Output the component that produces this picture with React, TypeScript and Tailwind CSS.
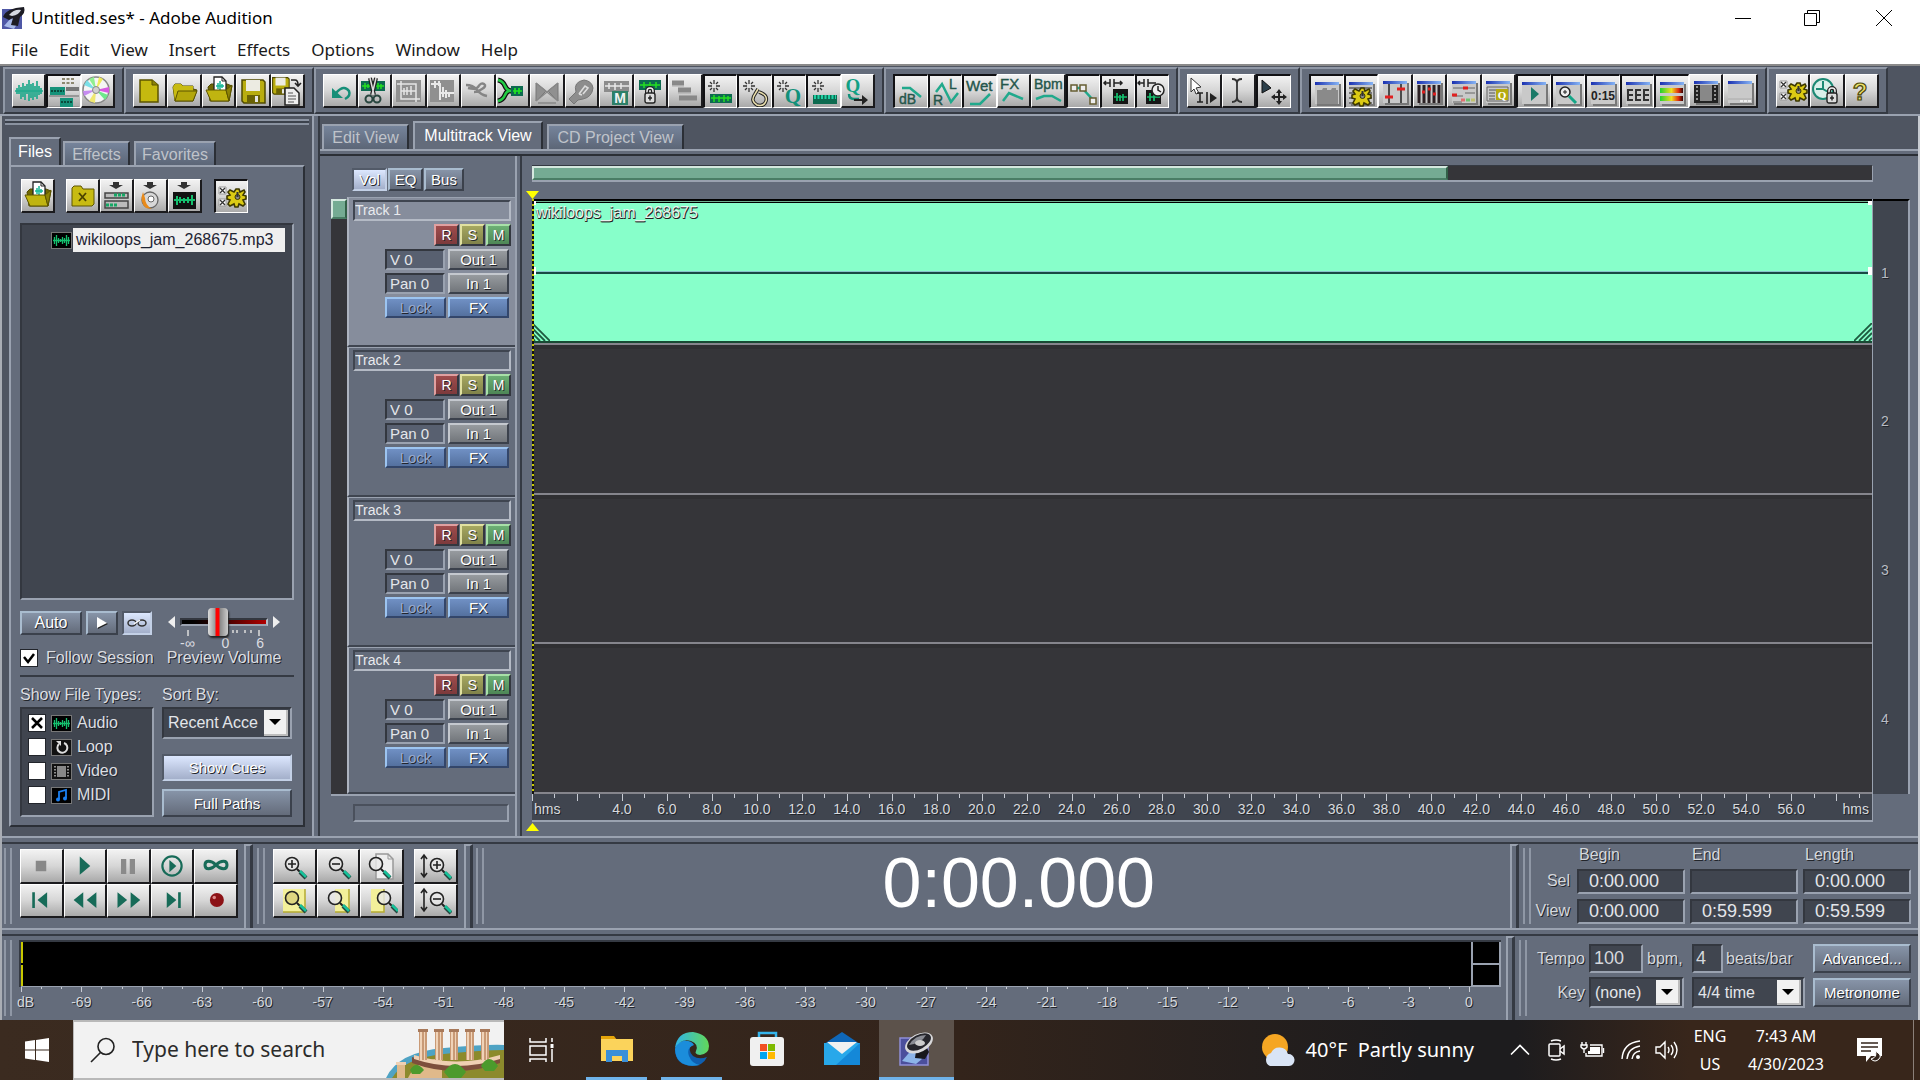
import { useState } from 'react';
import type { ReactNode } from 'react';
import clsx from 'clsx';

type IconButtonProps = {
  label: string;
  pressed?: boolean;
  className?: string;
  children: ReactNode;
};

const raised = 'border-t border-l border-r-2 border-b-2 border-t-white border-l-white border-r-[#1b1b1e] border-b-[#1b1b1e]';
const sunken = 'border-t-2 border-l-2 border-r border-b border-t-[#111114] border-l-[#111114] border-r-white border-b-white';
const metal = 'bg-linear-to-b from-[#f2f2f2] via-[#d6d6d6] to-[#a9a9a9]';
const inset = 'border-t-2 border-l-2 border-r-2 border-b-2 border-t-[#33373f] border-l-[#33373f] border-r-[#9aa2b0] border-b-[#9aa2b0]';
const well = 'bg-[#40454f]';
const shadowText = '[text-shadow:1px_1px_0_#22252b]';
const slateButton = 'border-2 border-t-[#a9bccf] border-l-[#a9bccf] border-r-[#3b414c] border-b-[#3b414c] bg-linear-to-b from-[#8794a8] to-[#646c7b]';
const litButton = 'border-2 border-t-[#525a68] border-l-[#525a68] border-r-[#c3d0e6] border-b-[#c3d0e6] bg-linear-to-b from-[#dde8ff] to-[#a3afca]';

function IconButton({ label, pressed, className, children }: IconButtonProps) {
  return (
    <button
      type="button"
      aria-label={label}
      aria-pressed={pressed}
      className={clsx('flex items-center justify-center overflow-hidden', metal, pressed ? sunken : raised, className)}
    >
      {children}
    </button>
  );
}

function Svg({ children, className = 'size-8' }: { children: ReactNode; className?: string }) {
  return (
    <svg viewBox="0 0 32 32" className={clsx('shrink-0', className)} fill="none" aria-hidden="true">
      {children}
    </svg>
  );
}

// Small tool window with a blue caption, used by the view toggles
function Win({ children }: { children?: ReactNode }) {
  return (
    <Svg>
      <path d="M6 29h23V8" stroke="#777" strokeWidth="2" />
      <rect x="4" y="9" width="24" height="19" fill="#c9c9c9" />
      <rect x="4" y="6" width="24" height="3" fill="url(#caption)" />
      {children}
    </Svg>
  );
}

const Sparkle = () => (
  <path d="M10 4v4M10 12v4M4 10h4M12 10h4M6 6l2 2M14 6l-2 2M6 14l2-2M14 14l-2-2" stroke="#333" strokeWidth="1.3" />
);

const Gear = ({ x = 0, y = 0 }: { x?: number; y?: number }) => (
  <g transform={`translate(${x} ${y})`}>
    <path
      d="M-1-8h3l1 3 4-2 1 2-2 3 3 1v3l-3 1 2 4-2 2-4-2-1 3h-3l-1-3-4 2-2-2 2-4-3-1v-3l3-1-2-3 2-2 4 2z"
      fill="#dccb14"
      stroke="#3d3800"
      strokeWidth="1.600"
    />
    <circle cx="0.500" r="2.500" fill="#8a8a8a" stroke="#3d3800" />
    <path d="M.5-5v5" stroke="#333" strokeWidth="2" />
  </g>
);

const Lock = ({ x, y }: { x: number; y: number }) => (
  <g transform={`translate(${x} ${y})`} stroke="#222" strokeWidth="1.4">
    <path d="M3 8V4a3 3 0 0 1 6 0v4" stroke="#222" strokeWidth="4" />
    <path d="M3 8V4a3 3 0 0 1 6 0v4" stroke="#eee" strokeWidth="1.5" />
    <rect x="1" y="6" width="10" height="10" rx="2" fill="#ddd" />
    <path d="M6 8.500v5M4 11h4" />
  </g>
);

const FolderShape = () => (
  <>
    <path d="M5 12l2-3h6l2 2h10v3l4 1-4 11H7z" fill="#8d8306" stroke="#4f4900" />
    <path d="M5 12l2-3h6l2 2h10v5H10L7 26z" fill="#c8bb12" />
    <path d="M10 16h19l-4 10H7z" fill="#b3a70b" stroke="#5d5500" />
  </>
);

const OpenBoxShape = () => (
  <>
    <path d="M5 12l3-3h16l5 2-3 15H7z" fill="#6f6703" stroke="#4f4900" />
    <path d="M11 2h8l4 4v13H11z" fill="#fff" stroke="#222" strokeWidth="1.300" />
    <path d="M19 2v4h4" stroke="#222" />
    <path d="M13 11h8M15 8v6M17 6v10M19 9v4" stroke="#18b898" strokeWidth="1.5" />
    <path d="M3 15h20l3 11H8z" fill="#c0b410" stroke="#5d5500" />
    <path d="M23 15l6-5-3 16z" fill="#8d8306" stroke="#5d5500" />
  </>
);

const FloppyShape = () => (
  <>
    <path d="M5 5h21l2 2v21H7l-2-2z" fill="#b9ad0f" stroke="#4f4900" strokeWidth="1.5" />
    <rect x="9" y="5" width="14" height="11" fill="#ecebe2" />
    <rect x="10" y="20" width="13" height="8" fill="#6a6204" />
    <rect x="18" y="21" width="3" height="6" fill="#e5e5e5" />
  </>
);

const MiniWave = () => (
  <svg viewBox="0 0 21 17" className="h-[17px] w-[21px] shrink-0" aria-hidden="true">
    <rect x="0.500" y="0.500" width="20" height="16" fill="#000" stroke="#777" />
    <path d="M2 8.500h17M3.500 5v7M5.500 3v11M7.500 6v5M9.500 7v3M11.500 5v7M13.500 6v5M15.500 3v11M17.500 5v7" stroke="#15c06e" strokeWidth="1.3" />
  </svg>
);

const Lens = ({ sign, x = 12, y = 11, fill }: { sign?: string; x?: number; y?: number; fill?: string }) => (
  <g transform={`translate(${x} ${y})`}>
    <path d="M5 5l3 3" stroke="#222" strokeWidth="2" />
    <path d="M8 8l6 6" stroke="#25463f" strokeWidth="4" />
    <path d="M8 7l6 6" stroke="#16c29a" strokeWidth="2.500" />
    <circle r="6.500" stroke="#222" strokeWidth="1.600" fill={fill ?? '#e8e8e8'} fillOpacity="0.8" />
    {sign === '+' && <path d="M-4 0H4M0-4V4" stroke="#222" strokeWidth="1.600" />}
    {sign === '-' && <path d="M-4 0H4" stroke="#222" strokeWidth="1.600" />}
  </g>
);

type Tool = { label: string; pressed?: boolean; icon: ReactNode };

const modeTools: Tool[] = [
  {
    label: 'Edit View',
    icon: (
      <Svg>
        <path d="M2 16h28M4 13v6M6 10v9M8 12v12M10 8v14M12 11v14M14 9v10M16 5v21M18 9v14M20 8v17M22 11v11M24 6v18M26 11v9M28 13v6" stroke="#20a98c" strokeWidth="1.700" />
      </Svg>
    ),
  },
  {
    label: 'Multitrack View',
    pressed: true,
    icon: (
      <Svg>
        <path d="M14 3h13M14 7h13" stroke="#8d8870" strokeWidth="2" strokeDasharray="3 1.5" />
        <rect x="2" y="11" width="15" height="8" fill="#16927a" />
        <rect x="18" y="11" width="13" height="4" fill="#777" />
        <path d="M1 20h30M1 31h30" stroke="#888" strokeWidth="1.500" />
        <rect x="12" y="22" width="13" height="9" fill="#16927a" />
        <path d="M3 15h13M13 26h11" stroke="#0b4a3c" strokeDasharray="2 1" strokeWidth="2" />
      </Svg>
    ),
  },
  {
    label: 'CD Project View',
    icon: (
      <Svg>
        <circle cx="15" cy="15" r="13" fill="#f5f5f5" stroke="#888" strokeWidth="1.500" />
        <path d="M15 15L8 4l5-2z" fill="#8ff08f" />
        <path d="M15 15L3 10l3-5z" fill="#7be0e8" />
        <path d="M15 15L2 16l1 5z" fill="#c58bf0" />
        <path d="M15 15L22 4l-4-2z" fill="#f0ec5a" />
        <path d="M15 15l13-3v6z" fill="#d65ae0" />
        <path d="M15 15l9 10 3-5z" fill="#6fe88c" />
        <path d="M15 15l-7 11 6 2z" fill="#f0e870" />
        <circle cx="15" cy="15" r="3.500" fill="#d0d0d0" stroke="#888" />
      </Svg>
    ),
  },
];

const fileTools: Tool[] = [
  {
    label: 'New Session',
    icon: (
      <Svg>
        <path d="M6 5h12l6 5v17H6z" fill="#c5b90f" stroke="#5b5300" strokeWidth="1.500" />
        <path d="M18 5v5h6" fill="#8d8306" stroke="#5b5300" />
      </Svg>
    ),
  },
  { label: 'Open Session', icon: <Svg><FolderShape /></Svg> },
  { label: 'Import File', icon: <Svg><OpenBoxShape /></Svg> },
  { label: 'Save Session', icon: <Svg><FloppyShape /></Svg> },
  {
    label: 'Save Session As',
    icon: (
      <Svg>
        <g transform="translate(-2 -1) scale(.72)"><FloppyShape /></g>
        <path d="M20 5h4q3 0 3 5M24 8l3 3 3-3" stroke="#222" strokeWidth="1.600" />
        <path d="M14 13h9l5 5v12H14z" fill="#eee" stroke="#222" strokeWidth="1.500" />
        <path d="M17 18h5M17 21h8M17 24h8M17 27h6" stroke="#555" />
      </Svg>
    ),
  },
];

const editTools: Tool[] = [
  {
    label: 'Undo',
    icon: (
      <Svg>
        <path d="M8 13v10h11z" fill="#168f78" />
        <path d="M12 18q8-9 13-2 2 5-4 8" stroke="#168f78" strokeWidth="2.500" />
      </Svg>
    ),
  },
  {
    label: 'Split',
    icon: (
      <Svg>
        <rect x="3" y="6" width="24" height="10" fill="#0d6a50" />
        <path d="M4 11h22M7 8v6M10 9v4M20 8v6M23 9v5" stroke="#25e020" strokeWidth="1.500" />
        <path d="M12 3l4 17M18 3l-4 17" stroke="#222" strokeWidth="4" />
        <path d="M12 3l4 17M18 3l-4 17" stroke="#ddd" strokeWidth="1.500" />
        <circle cx="11" cy="24" r="3.500" stroke="#29463f" strokeWidth="2" />
        <circle cx="19" cy="24" r="3.500" stroke="#29463f" strokeWidth="2" />
      </Svg>
    ),
  },
  {
    label: 'Trim',
    icon: (
      <Svg>
        <rect x="3" y="5" width="25" height="22" fill="#909090" />
        <path d="M8 6v18h19M4 9h19v18M8 16h15M11 13v7M14 12v8M18 11v9" stroke="#e5e5e5" strokeWidth="1.500" />
      </Svg>
    ),
  },
  {
    label: 'Cut to Clip',
    icon: (
      <Svg>
        <rect x="3" y="5" width="24" height="22" fill="#909090" />
        <path d="M4 9h10M8 6v7M12 6v5M13 10v15M16 12v10M19 15v8M22 17v5M13 18h14" stroke="#e9e9e9" strokeWidth="2" />
      </Svg>
    ),
  },
  {
    label: 'Crossfade',
    icon: (
      <Svg>
        <path d="M4 10q7 0 11 5t10 6M6 13q8 2 10-1 3-5 6-3t-2 5-8 3" stroke="#858585" strokeWidth="2.500" />
      </Svg>
    ),
  },
  {
    label: 'Join',
    icon: (
      <Svg>
        <path d="M2 5q5 1 7 6t7 5M2 26q5-1 7-6t7-4" stroke="#111" strokeWidth="5" />
        <path d="M2 5q5 1 7 6t7 5M2 26q5-1 7-6t7-4" stroke="#22cc44" strokeWidth="2.500" />
        <rect x="15" y="11" width="12" height="10" fill="#0d6a50" />
        <path d="M17 16h9M19 13v6M23 13v6" stroke="#22e622" strokeWidth="1.700" />
      </Svg>
    ),
  },
  {
    label: 'Fade',
    icon: (
      <Svg>
        <path d="M5 8l10 8L5 26zM27 8l-10 8 10 10z" fill="#909090" stroke="#777" />
        <path d="M5 8l22 18M27 8L5 26M7 28h18" stroke="#888" strokeWidth="1.500" />
      </Svg>
    ),
  },
  {
    label: 'Adjust Volume',
    icon: (
      <Svg>
        <path d="M4 24l7-7q-3-10 8-12 8 1 9 8-1 9-10 11l-5 1-4 4z" fill="#8d8d8d" stroke="#777" />
        <path d="M14 19l6-8 3 2-5 6M14 19l3 1" stroke="#ddd" strokeWidth="1.600" />
      </Svg>
    ),
  },
  {
    label: 'Mute Clip',
    icon: (
      <Svg>
        <rect x="4" y="6" width="25" height="11" fill="#8c8c8c" />
        <path d="M5 11h24M9 8v6M15 8v7M21 8v6" stroke="#e9e9e9" strokeWidth="1.500" />
        <rect x="12" y="16" width="16" height="14" fill="#2d8068" />
        <text x="20" y="28" textAnchor="middle" fontSize="14" fontFamily="Liberation Sans" fontWeight="bold" fill="#f3f3f3">M</text>
      </Svg>
    ),
  },
  {
    label: 'Lock in Time',
    icon: (
      <Svg>
        <rect x="5" y="5" width="22" height="10" fill="#0d6a50" />
        <path d="M6 10h20M10 7v6M16 7v6M22 7v6" stroke="#25e020" strokeWidth="1.500" />
        <Lock x={10} y={12} />
      </Svg>
    ),
  },
  {
    label: 'Group Clips',
    icon: (
      <Svg>
        <path d="M3 8h12M9 15h13M10 23h18" stroke="#888" strokeWidth="5" />
        <path d="M3 11h12M9 18h13" stroke="#aaa" />
      </Svg>
    ),
  },
  {
    label: 'Snap to Clips',
    pressed: true,
    icon: (
      <Svg>
        <Sparkle />
        <rect x="6" y="18" width="22" height="9" fill="#0d6a50" />
        <path d="M7 22h20M10 19v7M15 20v6M20 19v7M24 20v5" stroke="#25e020" strokeWidth="1.500" />
      </Svg>
    ),
  },
  {
    label: 'Snap to Loop Endpoints',
    pressed: true,
    icon: (
      <Svg>
        <Sparkle />
        <path d="M20 16q9 3 7 9t-9 4q-7-4-2-11l3-5" stroke="#222" strokeWidth="3.500" />
        <path d="M20 16q9 3 7 9t-9 4q-7-4-2-11l3-5" stroke="#eadfae" strokeWidth="1.500" />
      </Svg>
    ),
  },
  {
    label: 'Snap to Cues',
    pressed: true,
    icon: (
      <Svg>
        <Sparkle />
        <text x="20" y="27" textAnchor="middle" fontSize="21" fontFamily="Liberation Serif" fontWeight="bold" fill="#12907a">Q</text>
      </Svg>
    ),
  },
  {
    label: 'Snap to Ruler',
    pressed: true,
    icon: (
      <Svg>
        <Sparkle />
        <path d="M5 19h24v9H5z" fill="#0d6a50" />
        <path d="M6 21h22" stroke="#20d0a4" strokeWidth="4" strokeDasharray="2 1.5" />
      </Svg>
    ),
  },
  {
    label: 'Cue List',
    icon: (
      <Svg>
        <text x="12" y="17" textAnchor="middle" fontSize="19" fontFamily="Liberation Serif" fontWeight="bold" fill="#12a084">Q</text>
        <path d="M8 19q0 5 5 5h5" stroke="#12907a" strokeWidth="2.500" />
        <path d="M13 25h9" stroke="#222" strokeWidth="2" />
        <path d="M21 20l6 5-6 5z" fill="#222" />
      </Svg>
    ),
  },
];

const teal = { stroke: '#20a98c', strokeWidth: 2.5 };
const iconText = { fontFamily: 'Liberation Sans', fill: '#24564b', stroke: '#24564b', strokeWidth: 0.4 };

const envelopeTools: Tool[] = [
  { label: 'Volume Envelopes', pressed: true, icon: <Svg><path d="M7 12h8l11 9" {...teal} /><text x="4" y="28" fontSize="14" {...iconText}>dB</text></Svg> },
  {
    label: 'Pan Envelopes',
    pressed: true,
    icon: (
      <Svg>
        <path d="M7 16l6-8 9 18 7-9" {...teal} />
        <text x="20" y="13" fontSize="14" {...iconText}>L</text>
        <text x="4" y="29" fontSize="14" {...iconText}>R</text>
      </Svg>
    ),
  },
  { label: 'Wet/Dry Envelopes', pressed: true, icon: <Svg><text x="2" y="15" fontSize="15" {...iconText}>Wet</text><path d="M6 28h10l10-10" {...teal} /></Svg> },
  { label: 'FX Envelopes', icon: <Svg><text x="3" y="14" fontSize="15" {...iconText}>FX</text><path d="M6 26l6-8 14 6" {...teal} /></Svg> },
  { label: 'Tempo Envelopes', icon: <Svg><text x="2" y="14" fontSize="14" {...iconText}>Bpm</text><path d="M4 24l8-3h8l9 5" {...teal} /></Svg> },
  {
    label: 'Edit Envelopes',
    pressed: true,
    icon: (
      <Svg>
        <path d="M7 12h8l12 13" {...teal} />
        <path d="M4 9h6v6H4zM13 9h6v6h-6zM23 22h6v6h-6z" fill="#eee" stroke="#665d32" strokeWidth="1.500" />
      </Svg>
    ),
  },
  {
    label: 'Clip Edge Dragging',
    pressed: true,
    icon: (
      <Svg>
        <path d="M2 7h6M12 7h8M8 3v8M12 3v8M4 5l-2 2 2 2M18 5l2 2-2 2" stroke="#222" strokeWidth="1.500" />
        <rect x="11" y="13" width="15" height="15" fill="#151515" />
        <path d="M12 21h13M15 17v8M18 19v6M21 18v7" stroke="#15c06e" strokeWidth="1.700" />
      </Svg>
    ),
  },
  {
    label: 'Time Stretching',
    pressed: true,
    icon: (
      <Svg>
        <path d="M2 7h6M12 7h8M8 3v8M12 3v8M4 5l-2 2 2 2" stroke="#222" strokeWidth="1.500" />
        <rect x="10" y="14" width="15" height="14" fill="#151515" />
        <path d="M11 21h13M14 17v8M18 19v6" stroke="#15c06e" strokeWidth="1.700" />
        <circle cx="22" cy="14" r="6" fill="#eee" stroke="#222" strokeWidth="1.500" />
        <path d="M22 10v4l3 2" stroke="#222" strokeWidth="1.500" />
      </Svg>
    ),
  },
];

const cursorTools: Tool[] = [
  {
    label: 'Hybrid Tool',
    icon: (
      <Svg>
        <path d="M3 3l10 9-5 1 3 5-3 1-2-5-3 3z" fill="#fff" stroke="#333" />
        <path d="M9 18h6M12 18v9M9 27h6M19 17v12" stroke="#222" strokeWidth="1.600" />
        <path d="M22 18v10l7-5z" fill="#222" />
      </Svg>
    ),
  },
  { label: 'Time Selection Tool', icon: <Svg><path d="M9 4q5 0 5 4v14q0 5-5 5M19 4q-5 0-5 4v14q0 5 5 5" stroke="#333" strokeWidth="1.800" /></Svg> },
  {
    label: 'Move Tool',
    pressed: true,
    icon: (
      <Svg>
        <path d="M4 4l9 8-9 5z" fill="#2b3f4a" stroke="#111" />
        <path d="M21 15v12M15 21h12" stroke="#222" strokeWidth="2" />
        <path d="M18 17l3-4 3 4zM18 25l3 4 3-4zM17 18l-4 3 4 3zM25 18l4 3-4 3z" fill="#222" />
      </Svg>
    ),
  },
];

const windowTools: Tool[] = [
  { label: 'Organizer', pressed: true, icon: <Win><path d="M6 14h5l1-2h4v2h4l1-2h4v2h2v14H6z" fill="#8a8a8a" /></Win> },
  { label: 'Track Properties', pressed: true, icon: <Win><path d="M4 12h23M4 17h23M4 22h23M4 27h23" stroke="#777" strokeWidth="2" /><Gear x={17} y={20} /></Win> },
  { label: 'Mixer', icon: <Win><path d="M10 9v19M22 9v19" stroke="#222" strokeWidth="1.500" /><path d="M6 22h8M18 14h8" stroke="#e02020" strokeWidth="3" /></Win> },
  { label: 'Track Mixers', icon: <Win><path d="M6 10v18M11 10v18M16 10v18M21 10v18M26 10v18" stroke="#2b2023" strokeWidth="3" /><path d="M9 17h3M15 14h3M20 19h3" stroke="#e02020" strokeWidth="3" /></Win> },
  {
    label: 'Track EQ',
    icon: (
      <Win>
        <path d="M5 13h22M5 21h10M5 27h9M17 18h10" stroke="#666" />
        <path d="M15 13h5M4 20h5" stroke="#e02020" strokeWidth="3" />
        <path d="M13 25h4" stroke="#e07070" strokeWidth="3" /><path d="M18 25h4" stroke="#70c070" strokeWidth="3" /><path d="M23 25h4" stroke="#c0c070" strokeWidth="3" />
      </Win>
    ),
  },
  {
    label: 'Cue List Window',
    icon: (
      <Win>
        <path d="M5 12h21v14H5z" stroke="#666" />
        <path d="M7 15h7M7 18h6M7 21h6M7 24h6" stroke="#555" />
        <rect x="14" y="14" width="12" height="11" fill="#b5aa10" />
        <text x="20" y="24" textAnchor="middle" fontSize="11" fontFamily="Liberation Serif" fontWeight="bold" fill="#fff">Q</text>
      </Win>
    ),
  },
  { label: 'Transport', pressed: true, icon: <Win><path d="M13 11v14l8-7z" fill="#1b7a68" /></Win> },
  { label: 'Zoom', pressed: true, icon: <Win><circle cx="13" cy="16" r="5" fill="#eee" stroke="#222" strokeWidth="1.500" /><path d="M13 14v4M11 16h4" stroke="#222" /><path d="M17 20l7 7" stroke="#14a586" strokeWidth="3" /></Win> },
  { label: 'Time', pressed: true, icon: <Win><text x="16" y="24" textAnchor="middle" fontSize="12" fontFamily="Liberation Sans" fontWeight="bold" fill="#222">0:15</text></Win> },
  { label: 'Selection/View', pressed: true, icon: <Win><path d="M5 14h6M13 14h6M21 14h6M5 19h6M13 19h6M21 19h6M5 24h6M13 24h6M21 24h6M6 13v12M14 13v12M22 13v12" stroke="#333" strokeWidth="2" /></Win> },
  {
    label: 'Levels',
    pressed: true,
    icon: (
      <Win>
        <rect x="4" y="12" width="23" height="5" fill="url(#levels)" />
        <rect x="4" y="20" width="23" height="5" fill="url(#levels)" />
      </Win>
    ),
  },
  { label: 'Video', icon: <Win><rect x="4" y="10" width="24" height="18" fill="#222" /><rect x="10" y="10" width="12" height="16" fill="#888" /><path d="M7 11v16M25 11v16" stroke="#bbb" strokeWidth="1.500" strokeDasharray="2 2" /></Win> },
  { label: 'Status Bar', icon: <Win><path d="M4 24h24" stroke="#aaa" /><path d="M16 26h11" stroke="#eee" strokeWidth="2" strokeDasharray="3 1" /></Win> },
];

const helpTools: Tool[] = [
  {
    label: 'Settings',
    icon: (
      <Svg>
        <path d="M3 6h7v7H3zM3 18h7v7H3z" fill="#fff" stroke="#999" />
        <path d="M4 7l5 5M9 7l-5 5M4 19l5 5M9 19l-5 5" stroke="#333" strokeWidth="1.300" />
        <Gear x={21} y={16} />
      </Svg>
    ),
  },
  {
    label: 'Scheduler',
    icon: (
      <Svg>
        <circle cx="12" cy="14" r="10" fill="#d9f0ea" stroke="#1b8974" strokeWidth="2" />
        <path d="M12 6v8H5M12 14l5 3" stroke="#1b8974" strokeWidth="2" />
        <Lock x={15} y={12} />
      </Svg>
    ),
  },
  {
    label: 'Help',
    icon: (
      <Svg>
        <text x="15" y="25" textAnchor="middle" fontSize="24" fontFamily="Liberation Sans" fontWeight="bold" fill="#e8df6a" stroke="#4d4708" strokeWidth="1.200">?</text>
      </Svg>
    ),
  },
];

const menus = ['File', 'Edit', 'View', 'Insert', 'Effects', 'Options', 'Window', 'Help'];

function ToolGroup({ tools, className }: { tools: Tool[]; className: string }) {
  return (
    <div className={clsx('flex h-[47px] border-t-2 border-l-2 border-r-2 border-b-2 border-t-[#9098a6] border-l-[#9098a6] border-r-[#353a43] border-b-[#353a43] bg-[#646c7b] px-[7px] pt-[5px]', className)}>
      {tools.map(tool => (
        <IconButton key={tool.label} label={tool.label} pressed={tool.pressed} className="h-[34px] min-w-0 flex-1">
          {tool.icon}
        </IconButton>
      ))}
    </div>
  );
}

function TitleBar() {
  return (
    <div className="flex h-9 items-center bg-white text-black">
      <svg viewBox="0 0 24 24" className="ml-0.5 size-6" aria-hidden="true">
        <rect x="0" y="3" width="20" height="20" fill="#4e57a6" />
        <path d="M2 20l7-8 8 3-5 8z" fill="#a6b8e8" />
        <path d="M1 11Q4 2 22 1q2 6-4 10l-2 9-7-1 2-7-4 2z" fill="#1c1c24" />
        <path d="M7 9q5-6 12-5-2 5-9 6z" fill="#d5d9e2" />
      </svg>
      <h1 className="ml-[5px] flex-1 font-['Noto_Sans',sans-serif] text-[17px]">Untitled.ses* - Adobe Audition</h1>
      <button type="button" aria-label="Minimize" className="flex w-[68px] justify-center">
        <svg viewBox="0 0 16 16" className="size-4" stroke="#000"><path d="M0 8.500h16" /></svg>
      </button>
      <button type="button" aria-label="Restore" className="flex w-[70px] justify-center">
        <svg viewBox="0 0 16 16" className="size-4" fill="none" stroke="#000"><path d="M.5 3.500h12v12H.5zM3.500 3V.5h12v12H13" /></svg>
      </button>
      <button type="button" aria-label="Close" className="flex w-[73px] justify-center">
        <svg viewBox="0 0 16 16" className="size-4" stroke="#000"><path d="M0 0l16 16M16 0L0 16" /></svg>
      </button>
    </div>
  );
}

type CheckProps = { id: string; label: string; mark?: 'tick' | 'cross'; defaultChecked?: boolean; icon?: ReactNode };

function Check({ id, label, mark = 'tick', defaultChecked, icon }: CheckProps) {
  return (
    <div className={clsx('flex h-6 items-center', icon ? 'gap-[5px]' : 'gap-2')}>
      <span className="grid size-[18px] shrink-0">
        <input
          id={id}
          type="checkbox"
          defaultChecked={defaultChecked}
          className="peer col-start-1 row-start-1 size-[18px] appearance-none border border-[#22252b] bg-white"
        />
        <svg viewBox="0 0 18 18" className="pointer-events-none invisible col-start-1 row-start-1 size-[18px] peer-checked:visible" fill="none" stroke="#000" strokeWidth="2.500">
          {mark === 'tick' ? <path d="M4 8l4 5 6-8" /> : <path d="M4 4l10 10M14 4L4 14" />}
        </svg>
      </span>
      {icon}
      <label htmlFor={id} className={clsx('whitespace-nowrap', shadowText)}>{label}</label>
    </div>
  );
}

type DropdownProps = { id: string; label?: string; options: string[]; className: string };

function Dropdown({ id, label, options, className }: DropdownProps) {
  return (
    <div className={clsx('relative', inset, well, className)}>
      <select id={id} aria-label={label} className="h-full w-full appearance-none bg-transparent pl-1 text-[16px] text-[#e4e6ea] outline-none">
        {options.map(option => <option key={option} className="text-black">{option}</option>)}
      </select>
      <span className="pointer-events-none absolute inset-y-0 right-0.5 my-px flex w-6 items-center justify-center border-r-2 border-b-2 border-[#bdbdbd] bg-[#f1f1f1]">
        <svg viewBox="0 0 12 6" className="h-1.5 w-3" aria-hidden="true"><path d="M0 0h12L6 6z" fill="#000" /></svg>
      </span>
    </div>
  );
}

const fileTypes = [
  { id: 'audio', label: 'Audio', on: true, icon: <MiniWave /> },
  {
    id: 'loop',
    label: 'Loop',
    on: false,
    icon: (
      <svg viewBox="0 0 21 17" className="h-[17px] w-[21px] shrink-0" fill="none">
        <rect x="0.500" y="0.500" width="20" height="16" fill="#111" stroke="#777" />
        <path d="M8 5a5 5 0 1 0 5-1" stroke="#ddd" strokeWidth="2" /><path d="M5 2h5v5z" fill="#ddd" />
      </svg>
    ),
  },
  {
    id: 'video',
    label: 'Video',
    on: false,
    icon: (
      <svg viewBox="0 0 21 17" className="h-[17px] w-[21px] shrink-0" fill="none">
        <rect x="0.500" y="0.500" width="20" height="16" fill="#111" stroke="#777" />
        <rect x="6" y="3" width="9" height="11" fill="#888" />
        <path d="M4 3v12M17 3v12" stroke="#bbb" strokeWidth="1.500" strokeDasharray="1.5 1.500" />
      </svg>
    ),
  },
  {
    id: 'midi',
    label: 'MIDI',
    on: false,
    icon: (
      <svg viewBox="0 0 21 17" className="h-[17px] w-[21px] shrink-0" fill="none">
        <rect x="0.500" y="0.500" width="20" height="16" fill="#000" stroke="#777" />
        <path d="M8 12V5l7-2v8" stroke="#1b7ff0" strokeWidth="1.800" /><circle cx="7" cy="12.500" r="2" fill="#1b7ff0" /><circle cx="14" cy="11.500" r="2" fill="#1b7ff0" />
      </svg>
    ),
  },
];

const tabBevel = 'border-t-2 border-l-2 border-r-2 border-t-[#9aa2b0] border-l-[#9aa2b0] border-r-[#2b2f36]';
const idleTab = 'bg-linear-to-b from-[#76849b] to-[#5c6677] text-[#bfc3ca]';

function Organizer() {
  const [volume, setVolume] = useState(40);

  return (
    <aside className="flex w-[310px] shrink-0 flex-col bg-[#4f5561] pr-[7px] pl-[7px] text-[16px] text-[#dcdee2]">
      <div className="-mx-1 mt-[3px] h-1.5 border-y-2 border-[#8a92a0] bg-[#3c424c]" />
      <div role="tablist" className="mt-3 flex items-end">
        <button type="button" role="tab" aria-selected="true" className={clsx('h-7 w-[52px] bg-[#646c7b] text-white', tabBevel)}>Files</button>
        <button type="button" role="tab" className={clsx('ml-0.5 h-6 w-[67px]', idleTab, tabBevel)}>Effects</button>
        <button type="button" role="tab" className={clsx('ml-1 h-6 w-[82px]', idleTab, tabBevel)}>Favorites</button>
      </div>
      <div className="mb-[9px] flex flex-1 flex-col border-2 border-t-[#9aa2b0] border-l-[#9aa2b0] border-r-[#2b2f36] border-b-[#2b2f36] bg-[#646c7b] px-[9px] pt-3 pb-2">
        <div className="flex pl-px">
          <IconButton label="Import" className="mr-[11px] size-[34px]"><Svg><OpenBoxShape /></Svg></IconButton>
          <IconButton label="Close Files" className="size-[34px]">
            <Svg>
              <path d="M5 8l2-2h7l2 3h11v15l-2 2H5z" fill="#c8bb12" stroke="#5d5500" />
              <path d="M12 13l7 8M19 13l-7 8" stroke="#4a4300" strokeWidth="1.800" />
            </Svg>
          </IconButton>
          <IconButton label="Insert into Multitrack" className="size-[34px]">
            <Svg>
              <path d="M12 2h6v3h4l-7 4-7-4h4z" fill="#333" />
              <path d="M4 13h23v5H4zM4 21h23v7H4z" fill="#bbb" stroke="#444" strokeWidth="1.500" />
              <path d="M13 15h12M5 25h11" stroke="#15a865" strokeWidth="3" strokeDasharray="3 1" />
            </Svg>
          </IconButton>
          <IconButton label="Insert into CD Project" className="size-[34px]">
            <Svg>
              <path d="M12 2h6v3h4l-7 4-7-4h4z" fill="#333" />
              <circle cx="15" cy="20" r="8" fill="#d8d8d8" stroke="#666" strokeWidth="1.300" />
              <path d="M8 12q-4 10 3 16l6 1q-7-4-7-11z" fill="#e88a1a" />
              <circle cx="16" cy="19" r="3" fill="#fff" stroke="#666" />
            </Svg>
          </IconButton>
          <IconButton label="Edit File" className="mr-3 size-[34px]">
            <Svg>
              <path d="M12 2h6v3h4l-7 4-7-4h4z" fill="#333" />
              <rect x="4" y="12" width="23" height="17" fill="#111" />
              <path d="M5 20h21M8 16v9M11 17v6M15 18v5M19 17v6M23 15v10" stroke="#15c06e" strokeWidth="2" />
            </Svg>
          </IconButton>
          <IconButton label="Advanced Options" pressed className="size-[34px]">
            <Svg>
              <path d="M3 6h7v7H3zM3 18h7v7H3z" fill="#fff" stroke="#999" />
              <path d="M4 7l5 5M9 7l-5 5M4 19l5 5M9 19l-5 5" stroke="#333" strokeWidth="1.300" />
              <Gear x={21} y={16} />
            </Svg>
          </IconButton>
        </div>

        <ul className={clsx('mt-2.5 flex-1', inset, well)}>
          <li className="mt-[3px] mr-[7px] ml-[29px] flex items-center">
            <MiniWave />
            <span className="ml-px flex h-6 flex-1 items-center bg-[#efefef] pl-[3px] text-[#1d2333]">wikiloops_jam_268675.mp3</span>
          </li>
        </ul>

        <div className="mt-2 mb-1.5 flex h-[61px] justify-between">
          <div className="flex flex-col justify-between pt-[3px]">
            <div className="flex h-6 gap-1">
              <button type="button" className={clsx('w-[62px] text-[16px] leading-none text-white', shadowText, slateButton)}>Auto</button>
              <button type="button" aria-label="Play" className={clsx('flex w-8 items-center justify-center', slateButton)}>
                <svg viewBox="0 0 12 12" className="size-3"><path d="M2 1v11l10-5z" fill="#222" /><path d="M1 0v11l10-5z" fill="#fff" /></svg>
              </button>
              <button type="button" aria-label="Loop" className={clsx('flex w-[30px] items-center justify-center', litButton)}>
                <svg viewBox="0 0 20 10" className="h-2.5 w-5" fill="none" stroke="#333" strokeWidth="1.500"><ellipse cx="5" cy="5" rx="4" ry="3" /><ellipse cx="15" cy="5" rx="4" ry="3" /><path d="M7 6l6-4" stroke="#fff" /></svg>
              </button>
            </div>
            <div className="flex h-[22px] items-center"><Check id="follow" label="Follow Session" defaultChecked /></div>
          </div>
          <div className="mr-3.5 flex w-[112px] flex-col items-center">
            <div className="relative flex h-7 w-full items-center justify-between">
              <svg viewBox="0 0 7 12" className="h-3 w-[7px]"><path d="M7 0v12L0 6z" fill="#eee" /></svg>
              <svg viewBox="0 0 88 6" className="absolute bottom-0 left-3 h-1.5 w-[88px]" stroke="#ddd" strokeWidth="1.500">
                <path d="M8 0v6M79 0v6M53 0v3M57 0v3M65 0v3M71 0v3" />
              </svg>
              <input
                id="preview-volume"
                type="range"
                value={volume}
                onChange={e => setVolume(Number(e.target.value))}
                className="relative h-7 w-[88px] appearance-none bg-transparent [&::-webkit-slider-runnable-track]:h-2 [&::-webkit-slider-runnable-track]:border-2 [&::-webkit-slider-runnable-track]:border-t-[#33373f] [&::-webkit-slider-runnable-track]:border-l-[#33373f] [&::-webkit-slider-runnable-track]:border-r-[#b5bbc6] [&::-webkit-slider-runnable-track]:border-b-[#9aa2b0] [&::-webkit-slider-runnable-track]:bg-linear-to-r [&::-webkit-slider-runnable-track]:from-black [&::-webkit-slider-runnable-track]:to-[#b00000] [&::-webkit-slider-thumb]:-mt-3 [&::-webkit-slider-thumb]:h-7 [&::-webkit-slider-thumb]:w-5 [&::-webkit-slider-thumb]:appearance-none [&::-webkit-slider-thumb]:rounded-sm [&::-webkit-slider-thumb]:bg-[linear-gradient(90deg,#ddd_0,#999_7px,#f00_8px,#f00_11px,#888_12px,#ccc_100%)] [&::-webkit-slider-thumb]:shadow-[1px_2px_2px_#222]"
              />
              <svg viewBox="0 0 7 12" className="h-3 w-[7px]"><path d="M0 0v12l7-6z" fill="#eee" /></svg>
            </div>
            <div className="flex h-3.5 w-[88px] items-center justify-between text-[14px] leading-3.5">
              <span>-∞</span>
              <span>0</span>
              <span className="mr-1">6</span>
            </div>
            <label htmlFor="preview-volume" className={clsx('leading-4 whitespace-nowrap', shadowText)}>Preview Volume</label>
          </div>
        </div>

        <hr className="mb-1.5 h-0.5 border-0 bg-[#353a43]" />

        <div className="flex gap-2">
          <fieldset className="w-[134px]">
            <legend className={clsx('h-6 whitespace-nowrap', shadowText)}>Show File Types:</legend>
            <div className={clsx('h-[110px] pt-0.5 pl-1.5', inset, well)}>
              {fileTypes.map(type => <Check key={type.id} id={type.id} label={type.label} mark="cross" defaultChecked={type.on} icon={type.icon} />)}
            </div>
          </fieldset>
          <div className="flex w-[130px] flex-col">
            <label htmlFor="sort" className={clsx('h-6', shadowText)}>Sort By:</label>
            <Dropdown id="sort" options={['Recent Acce', 'Filename', 'File Type']} className="h-8" />
            <button type="button" className={clsx('mt-[15px] h-[27px] text-[15px] leading-none text-white', shadowText, litButton)}>Show Cues</button>
            <button type="button" className={clsx('mt-2 h-7 text-[15px] leading-none text-white', shadowText, slateButton)}>Full Paths</button>
          </div>
        </div>
      </div>
    </aside>
  );
}

const field = 'h-[21px] w-[60px] bg-[#586070] pl-[3px] text-[15px] leading-none text-[#e4e6ea] outline-none';
const blueButton = 'h-[21px] w-[61px] border-2 border-t-[#9cc4f0] border-l-[#9cc4f0] border-r-[#33466a] border-b-[#33466a] bg-linear-to-b from-[#7090c4] to-[#54719f] text-[15px] leading-none';
const greyButton = 'h-[21px] w-[61px] border-2 border-t-[#c4c8ce] border-l-[#c4c8ce] border-r-[#3b414c] border-b-[#3b414c] bg-linear-to-b from-[#979b9f] to-[#72767b] text-[15px] leading-none text-white';
const rsmButton = 'h-[22px] w-[25px] border-2 border-r-[#33373f] border-b-[#33373f] text-[14px] leading-none text-white';

function TrackHeader({ track, selected }: { track: number; selected: boolean }) {
  return (
    <div className={clsx('flex flex-col items-end border-t border-b-2 border-l-2 border-t-[#9aa2b0] border-b-[#3f4550] border-l-[#aeb4c0] pr-1 pl-1', selected ? 'bg-[#868d9c]' : 'bg-[#646c7b]')}>
      <input
        aria-label={`Track ${track} name`}
        defaultValue={`Track ${track}`}
        className="mt-0.5 h-[21px] w-full border-2 border-t-[#3f4550] border-l-[#3f4550] border-r-[#b4bac5] border-b-[#b4bac5] bg-transparent text-[14px] text-[#e8eaee] outline-none"
      />
      <div className="mt-[3px] flex gap-px">
        <button type="button" aria-label="Record" className={clsx(rsmButton, shadowText, 'border-t-[#e0a0a0] border-l-[#e0a0a0] bg-linear-to-b from-[#a04c4c] to-[#7c3a3c]')}>R</button>
        <button type="button" aria-label="Solo" className={clsx(rsmButton, shadowText, 'border-t-[#e0e0a0] border-l-[#e0e0a0] bg-linear-to-b from-[#a6a860] to-[#80824a]')}>S</button>
        <button type="button" aria-label="Mute" className={clsx(rsmButton, shadowText, 'border-t-[#a8e0a8] border-l-[#a8e0a8] bg-linear-to-b from-[#6cb074] to-[#4e8656]')}>M</button>
      </div>
      <div className="mt-[3px] mr-0.5 grid grid-cols-[auto_auto] gap-x-0.5 gap-y-[3px]">
        <input aria-label={`Track ${track} volume`} defaultValue="V 0" className={clsx(field, inset)} />
        <button type="button" className={clsx(greyButton, shadowText)}>Out 1</button>
        <input aria-label={`Track ${track} pan`} defaultValue="Pan 0" className={clsx(field, inset)} />
        <button type="button" className={clsx(greyButton, shadowText)}>In 1</button>
        <button type="button" className={clsx(blueButton, shadowText, 'text-[#97a9cc]')}>Lock</button>
        <button type="button" className={clsx(blueButton, shadowText, 'text-white')}>FX</button>
      </div>
    </div>
  );
}

const tracks = [1, 2, 3, 4];
const viewLength = 59.599;
const sessionLength = 87.2;
const seconds = Array.from({ length: 60 }, (_, i) => i);
const timeLabels = Array.from({ length: 27 }, (_, i) => 4 + i * 2);
const laneRows = 'grid grid-rows-[146fr_150fr_149fr_150fr]';

function Corner({ className }: { className: string }) {
  return (
    <svg viewBox="0 0 18 18" className={clsx('absolute bottom-0 size-[18px]', className)} stroke="#1d5a3f" strokeWidth="1.800" fill="none">
      <path d="M0 0l18 18M0 5l13 13M0 10l8 8M0 15l3 3" />
    </svg>
  );
}

function Timeline() {
  return (
    <div className="flex min-w-0 flex-1 flex-col bg-[#646c7b] pr-2 pl-2.5">
      <div className="mt-[9px] mr-[37px] h-[17px] border-t border-r border-b-2 border-[#9aa2b0] border-t-[#353a43] bg-[#353539]">
        <div
          className="h-full border-2 border-t-[#d5e8df] border-l-[#d5e8df] border-r-[#336048] border-b-[#4a7d65] bg-[#75ab93]"
          style={{ width: `${(viewLength / sessionLength) * 100}%` }}
        />
      </div>
      <svg viewBox="0 0 13 8" className="mt-[9px] -ml-1.5 h-2 w-[13px]"><path d="M0 0h13L6.500 8z" fill="#ffff00" /></svg>
      <div className="flex flex-1">
        <div className={clsx('relative min-w-0 flex-1 border-r border-[#9aa2b0] bg-[#353539]', laneRows)}>
          <div className="border-b-2 border-[#85858c]">
            <div className="relative h-full border-t-2 border-b-2 border-t-black border-b-[#184a34] bg-[#87ffca]">
              <div className="h-0.5 border-b border-black bg-[#6fb090]" />
              <span className="absolute top-0 left-1 text-[16px] text-[#e9f5ef] [text-shadow:1px_1px_0_#222,0_1px_0_#222]">wikiloops_jam_268675</span>
              <div className="absolute inset-x-0 top-1/2 h-[3px] border-b-2 border-[#184a44] bg-[#86c4cc]" />
              <span className="absolute top-0 left-0 size-1 bg-white" />
              <span className="absolute top-0 right-0 size-1 bg-white" />
              <span className="absolute top-[66px] left-0 h-2 w-1 bg-white" />
              <span className="absolute top-[66px] right-0 h-2 w-1 bg-white" />
              <Corner className="left-0" />
              <Corner className="right-0 -scale-x-100" />
            </div>
          </div>
          {tracks.slice(1).map(track => (
            <div key={track} className="border-t-4 border-b-2 border-t-[#2f2f32] border-b-[#85858c]" />
          ))}
          <span className="absolute inset-y-0 left-0 w-0.5 bg-[repeating-linear-gradient(#c8c800_0_2px,#111_2px_5px)]" />
        </div>
        <div className={clsx('w-[37px] border-t-2 border-r-2 border-t-black border-r-[#9aa2b0] bg-[#40454f] text-[14px] text-[#b8bcc4]', laneRows)}>
          {tracks.map(track => <span key={track} className={clsx('flex items-center pl-2', shadowText)}>{track}</span>)}
        </div>
      </div>
      <div className="relative mr-[37px] h-7 border-r border-b-2 border-[#9aa2b0] bg-[#40454f] text-[14px] text-[#d8dade]">
        {seconds.map(s => (
          <span key={s} className={clsx('absolute top-0 w-px bg-[#c8ccd4]', s % 2 ? 'h-1' : 'h-[7px]')} style={{ left: `${(s / viewLength) * 100}%` }} />
        ))}
        <span className={clsx('absolute top-[7px] left-0.5 leading-4', shadowText)}>hms</span>
        {timeLabels.map(s => (
          <span key={s} className={clsx('absolute top-[7px] -translate-x-1/2 leading-4', shadowText)} style={{ left: `${(s / viewLength) * 100}%` }}>
            {s.toFixed(1)}
          </span>
        ))}
        <span className={clsx('absolute top-[7px] right-[3px] leading-4', shadowText)}>hms</span>
      </div>
      <svg viewBox="0 0 13 8" className="mt-px mb-[5px] -ml-1.5 h-2 w-[13px]"><path d="M0 8h13L6.500 0z" fill="#ffff00" /></svg>
    </div>
  );
}

const smallTab = 'h-[23px] text-[15px] leading-none text-white';

function Multitrack() {
  return (
    <section className="flex min-w-0 flex-1 flex-col bg-[#646c7b]">
      <div role="tablist" className="flex h-[33px] shrink-0 items-end bg-[#4f5561] text-[16px]">
        <button type="button" role="tab" className={clsx('ml-0.5 h-[25px] w-[87px]', idleTab, tabBevel)}>Edit View</button>
        <button type="button" role="tab" aria-selected="true" className={clsx('ml-1 h-7 w-[130px] bg-[#646c7b] whitespace-nowrap text-white', tabBevel)}>Multitrack View</button>
        <button type="button" role="tab" className={clsx('ml-1 h-[25px] w-[137px] whitespace-nowrap', idleTab, tabBevel)}>CD Project View</button>
      </div>
      <div className="h-[7px] shrink-0 border-t-2 border-b-2 border-t-[#9aa2b0] border-b-[#2b2f36]" />
      <div className="flex flex-1">
        <div className="flex w-[195px] shrink-0 flex-col pl-[11px]">
          <div className="mt-3 mb-1.5 flex gap-px pl-[21px]">
            <button type="button" className={clsx(smallTab, 'w-[35px]', shadowText, litButton)}>Vol</button>
            <button type="button" className={clsx(smallTab, 'w-[35px]', shadowText, slateButton)}>EQ</button>
            <button type="button" className={clsx(smallTab, 'w-10', shadowText, slateButton)}>Bus</button>
          </div>
          <div className="flex flex-1 border-b-2 border-[#9aa2b0]">
            <div className="mt-0.5 w-4 bg-[#353539]">
              <div className="h-5 border-2 border-t-[#d5e8df] border-l-[#d5e8df] border-r-[#336048] border-b-[#4a7d65] bg-[#75ab93]" />
            </div>
            <div className="grid min-w-0 flex-1 grid-rows-[150fr_150fr_150fr_147fr]">
              {tracks.map(track => <TrackHeader key={track} track={track} selected={track === 1} />)}
            </div>
          </div>
          <div className="mt-2 mr-1.5 mb-3.5 ml-[22px] h-[18px] border-2 border-t-[#4a505c] border-l-[#4a505c] border-r-[#9aa2b0] border-b-[#9aa2b0]" />
        </div>
        <div className="w-[7px] shrink-0 border-r-2 border-l-2 border-r-[#353a43] border-l-[#9aa2b0]" />
        <Timeline />
      </div>
    </section>
  );
}

const Grip = () => <div className="my-1 w-2 shrink-0 border-r-2 border-l-2 border-[#8f97a5]" />;
const Splitter = () => <div className="w-[9px] shrink-0 border-t-2 border-r-[3px] border-l-2 border-t-[#9aa2b0] border-r-[#353a43] border-l-[#9aa2b0]" />;

const g = '#176b58';
const transport: Tool[] = [
  { label: 'Stop', icon: <Svg className="size-7"><path d="M10 10h12v12H10z" fill="#888" /></Svg> },
  { label: 'Play', icon: <Svg className="size-7"><path d="M10 5v21l12-10z" fill={g} /></Svg> },
  { label: 'Pause', icon: <Svg className="size-7"><path d="M8 8h6v17H8zM18 8h6v17h-6z" fill="#8a8a8a" /></Svg> },
  { label: 'Play to End', icon: <Svg className="size-7"><circle cx="16" cy="16" r="11" stroke={g} strokeWidth="2.500" /><path d="M13 9v14l8-7z" fill={g} /></Svg> },
  { label: 'Play Looped', icon: <Svg className="size-8"><path d="M16 15C11 10 5 10 5 15s6 5 11 0 11-5 11 0-6 5-11 0z" stroke={g} strokeWidth="3" /></Svg> },
  { label: 'Go to Beginning', icon: <Svg className="size-7"><path d="M6 7h3v18H6zM23 7v18l-11-9z" fill={g} /></Svg> },
  { label: 'Rewind', icon: <Svg className="size-7"><path d="M14 7v18L3 16zM29 7v18l-11-9z" fill={g} /></Svg> },
  { label: 'Fast Forward', icon: <Svg className="size-7"><path d="M4 7v18l11-9zM19 7v18l11-9z" fill={g} /></Svg> },
  { label: 'Go to End', icon: <Svg className="size-7"><path d="M10 7v18l11-9zM23 7h3v18h-3z" fill={g} /></Svg> },
  { label: 'Record', icon: <Svg className="size-7"><circle cx="17" cy="16" r="8" fill="#8c1216" /><circle cx="14" cy="13" r="2" fill="#d88" /></Svg> },
];

const zooms: Tool[] = [
  { label: 'Zoom In', icon: <Svg><Lens sign="+" x={14} y={14} /></Svg> },
  { label: 'Zoom Out', icon: <Svg><Lens sign="-" x={14} y={14} /></Svg> },
  { label: 'Zoom Out Full', icon: <Svg><path d="M10 4h12l5 5v20H10z" fill="#eee" stroke="#999" strokeWidth="1.500" /><path d="M22 4v5h5" stroke="#999" /><Lens x={10} y={14} /></Svg> },
  { label: 'Zoom to Selection', icon: <Svg><path d="M5 5h22v23H5z" fill="#f3f09a" /><path d="M5 28h22V5" stroke="#b5ab30" strokeWidth="1.500" /><Lens x={14} y={14} fill="#d8cf7a" /></Svg> },
  { label: 'Zoom to Left Edge', icon: <Svg><path d="M13 5h14v23H13z" fill="#f3f09a" /><path d="M13 28h14V5" stroke="#b5ab30" strokeWidth="1.500" /><Lens x={13} y={14} /></Svg> },
  { label: 'Zoom to Right Edge', icon: <Svg><path d="M5 5h13v23H5z" fill="#f3f09a" /><path d="M5 28h13V5" stroke="#b5ab30" strokeWidth="1.500" /><Lens x={18} y={14} /></Svg> },
];

const vertical = <path d="M4 5v22M1 9l3-4 3 4M1 23l3 4 3-4" stroke="#222" strokeWidth="1.600" />;

const timeField = 'h-[25px] w-[108px] pl-2.5 text-[18px] leading-none text-[#e4e6ea] outline-none';

const timeRows = [
  { name: 'Sel', values: ['0:00.000', '', '0:00.000'] },
  { name: 'View', values: ['0:00.000', '0:59.599', '0:59.599'] },
];

function TransportRow() {
  return (
    <div className="flex h-21 text-[16px] text-[#d5d8dd]">
      <div className="pl-0.5" />
      <Grip />
      <div className="mt-[5px] mr-1.5 ml-2 grid h-[69px] w-[218px] grid-cols-5 grid-rows-2">
        {transport.map(tool => <IconButton key={tool.label} label={tool.label}>{tool.icon}</IconButton>)}
      </div>
      <Splitter />
      <div className="pl-1" />
      <Grip />
      <div className="mt-[5px] mr-2.5 ml-2 grid h-[69px] w-[131px] grid-cols-3 grid-rows-2">
        {zooms.map(tool => <IconButton key={tool.label} label={tool.label}>{tool.icon}</IconButton>)}
      </div>
      <div className="mt-[5px] mr-1.5 grid h-[69px] w-11 grid-rows-2">
        <IconButton label="Zoom In Vertically"><Svg>{vertical}<Lens sign="+" x={17} y={15} /></Svg></IconButton>
        <IconButton label="Zoom Out Vertically"><Svg>{vertical}<Lens sign="-" x={17} y={15} /></Svg></IconButton>
      </div>
      <Splitter />
      <div className="pl-[3px]" />
      <Grip />
      <output aria-label="Time" className="flex flex-1 items-center justify-center pb-1.5 pl-11 text-[70px] leading-none text-white">0:00.000</output>
      <Splitter />
      <div className="pl-1" />
      <Grip />
      <table className="mr-0.5 ml-auto self-start border-separate border-spacing-x-[5px] border-spacing-y-0">
        <thead>
          <tr className="h-[22px]">
            <td />
            {['Begin', 'End', 'Length'].map(name => <th key={name} className={clsx('pl-0.5 text-left leading-[22px] font-normal', shadowText)}>{name}</th>)}
          </tr>
        </thead>
        <tbody>
          {timeRows.map(row => (
            <tr key={row.name} className="h-[30px]">
              <th className={clsx('w-9 pr-0.5 text-right font-normal', shadowText)}>{row.name}</th>
              {row.values.map((value, i) => (
                <td key={i}><input aria-label={`${row.name} ${['begin', 'end', 'length'][i]}`} defaultValue={value} className={clsx('block', timeField, inset, well)} /></td>
              ))}
            </tr>
          ))}
        </tbody>
      </table>
    </div>
  );
}

const meterSteps = Array.from({ length: 25 }, (_, i) => -72 + i * 3);
const meterTicks = Array.from({ length: 73 }, (_, i) => i);

function LevelsRow() {
  return (
    <div className="flex h-21 text-[16px] text-[#d5d8dd]">
      <div className="pl-0.5" />
      <Grip />
      <div className="mr-[5px] ml-[7px] min-w-0 flex-1">
        <div className="mt-1 flex h-[47px] border-t-2 border-l-2 border-[#353a43]">
          <div className="flex flex-1 flex-col justify-between border-b border-[#9aa2b0] bg-black">
            <span className="h-[21px] w-0.5 bg-[#c8c800]" />
            <span className="h-[21px] w-0.5 bg-[#c8c800]" />
          </div>
          <div className="grid w-[30px] grid-rows-2 gap-0.5 border-x-2 border-b-2 border-[#9aa2b0] bg-[#9aa2b0]">
            <span className="bg-black" />
            <span className="bg-black" />
          </div>
        </div>
        <div className="relative mr-8 ml-0.5 h-6 text-[14px] leading-4">
          {meterTicks.map(tick => (
            <span key={tick} className={clsx('absolute top-0 w-px bg-[#c8ccd4]', tick % 3 ? 'h-0.5' : 'h-[5px]')} style={{ left: `${(tick / 72) * 100}%` }} />
          ))}
          {meterSteps.map(db => (
            <span
              key={db}
              className={clsx('absolute top-[7px]', db === -72 ? '-left-1' : '-translate-x-1/2', shadowText)}
              style={db === -72 ? undefined : { left: `${((db + 72) / 72) * 100}%` }}
            >
              {db === -72 ? 'dB' : db}
            </span>
          ))}
        </div>
      </div>
      <Splitter />
      <div className="pl-1" />
      <Grip />
      <div className="grid w-[386px] shrink-0 grid-cols-[58px_54px_49px_31px_1fr_98px] grid-rows-[29px_31px] items-center gap-y-1 pt-2 pr-0.5 pl-1">
        <label htmlFor="tempo" className={clsx('mr-1 text-right', shadowText)}>Tempo</label>
        <input id="tempo" defaultValue="100" className={clsx('h-[29px] w-[54px] pl-[3px] text-[18px] outline-none', inset, well)} />
        <span className={clsx('pl-1', shadowText)}>bpm,</span>
        <input id="beats" defaultValue="4" className={clsx('h-[29px] w-[31px] pl-0.5 text-[18px] outline-none', inset, well)} />
        <label htmlFor="beats" className={clsx('pl-[3px]', shadowText)}>beats/bar</label>
        <button type="button" className={clsx('h-[29px] text-[15px] leading-none text-white', shadowText, slateButton)}>Advanced...</button>
        <label htmlFor="key" className={clsx('mr-1 text-right', shadowText)}>Key</label>
        <div className="col-span-2 flex"><Dropdown id="key" options={['(none)', 'C', 'D', 'E', 'F', 'G', 'A', 'B']} className="h-[31px] w-[95px]" /></div>
        <div className="col-span-2 flex"><Dropdown id="meter" label="Time signature" options={['4/4 time', '3/4 time', '6/8 time']} className="h-[31px] w-[113px]" /></div>
        <button type="button" className={clsx('h-[29px] text-[15px] leading-none text-white', shadowText, slateButton)}>Metronome</button>
      </div>
      <div className="w-[5px]" />
    </div>
  );
}

const Sash = () => <div className="h-2 border-t-2 border-b-2 border-t-[#9aa2b0] border-b-[#353a43]" />;

function AcropolisArt() {
  return (
    <svg viewBox="0 0 120 56" className="h-full w-[120px]" aria-hidden="true">
      <path d="M2 56Q14 30 60 26t60-3v33z" fill="#4fa3c4" />
      <path d="M8 56Q20 36 60 32t60-4v28z" fill="#8c8a2c" />
      <path d="M24 56q8-18 34-20v20z" fill="#e0b98a" />
      <path d="M28 35q44 16 88 0v6q-44 16-88 0z" fill="#7d4f3c" />
      <path d="M30 33q42 13 86 0v4q-44 14-86 0z" fill="#efd0b3" />
      {[35, 51, 66, 82, 97].map(x => (
        <g key={x} transform={`translate(${x} 0)`}>
          <rect width="8" height="29" y="9" fill="#c99a76" />
          <rect width="2" height="29" x="1" y="9" fill="#f0d3b8" />
          <rect width="1" height="29" x="5" y="9" fill="#f0d3b8" />
          <rect width="10" height="3" x="-1" y="7" fill="#a8795a" />
        </g>
      ))}
      <rect width="8" height="14" x="13" y="42" fill="#e0b98a" />
      <rect width="10" height="3" x="12" y="40" fill="#efd0b3" />
      <path d="M26 48q6-10 14 0l-4 4h-8zM60 50q11-16 22 0l-5 6H65zM97 44q8-14 17 0l-4 5H101z" fill="#4c9a2c" />
    </svg>
  );
}

const apps = [
  {
    name: 'File Explorer',
    open: true,
    icon: (
      <svg viewBox="0 0 34 34" className="size-[34px]">
        <path d="M1 4h13l3 4H1z" fill="#e5a50a" />
        <path d="M1 7h32v22H1z" fill="#fbd35b" />
        <path d="M6 18h22v12h-6v-6H12v6H6z" fill="#3a8fd8" />
      </svg>
    ),
  },
  {
    name: 'Microsoft Edge',
    open: true,
    icon: (
      <svg viewBox="0 0 36 36" className="size-9">
        <path d="M1 18Q1 34 18 35q11 0 15-9-8 3-14-1-6-6-1-12L10 9z" fill="#0f5fb0" />
        <path d="M1 18q1-7 8-8 8-1 11 4-8 3-5 11 3 8 11 9Q2 38 1 18z" fill="#1b8ddb" />
        <path d="M1 17Q3 1 19 1q15 2 16 14 0 8-9 9-6-1-4-4 3-7-5-10-10-3-16 7z" fill="url(#edge)" />
      </svg>
    ),
  },
  {
    name: 'Microsoft Store',
    open: false,
    icon: (
      <svg viewBox="0 0 36 36" className="size-9" fill="none">
        <path d="M10 8V2h17v6" stroke="#35b5ec" strokeWidth="2.500" />
        <rect x="1" y="6" width="34" height="29" rx="3" fill="#f0f0f0" />
        <path d="M11 13h7v7h-7z" fill="#f25022" /><path d="M19 13h7v7h-7z" fill="#7fba00" />
        <path d="M11 21h7v7h-7z" fill="#00a4ef" /><path d="M19 21h7v7h-7z" fill="#ffb900" />
      </svg>
    ),
  },
  {
    name: 'Mail',
    open: false,
    icon: (
      <svg viewBox="0 0 36 36" className="size-9">
        <path d="M0 13L18 1l18 12z" fill="#0f67b8" />
        <path d="M0 12h36v22H0z" fill="#28a8ea" />
        <path d="M36 12v22H12z" fill="#1488d8" />
        <path d="M3 11h30L18 23z" fill="#f1f1f1" />
      </svg>
    ),
  },
  {
    name: 'Adobe Audition',
    open: true,
    active: true,
    icon: (
      <svg viewBox="0 0 36 36" className="size-9" fill="none">
        <rect x="1" y="7" width="28" height="27" fill="#4b4f9c" stroke="#8f8fd8" strokeWidth="1.500" />
        <path d="M3 30l12-14 8 12-6 5z" fill="#8cb4e8" />
        <path d="M17 20l11-3 2 4-4 7-10-1z" fill="#17171b" />
        <ellipse cx="20" cy="12" rx="15" ry="9" transform="rotate(-28 20 12)" fill="#d8d8da" />
        <ellipse cx="20" cy="11" rx="13" ry="7" transform="rotate(-28 20 11)" fill="#26262c" />
        <path d="M10 14q6-10 17-10-4 8-17 10z" fill="#8a8c94" />
        <ellipse cx="21" cy="12" rx="5" ry="3" fill="#ccc" />
      </svg>
    ),
  },
];

function Taskbar() {
  return (
    <footer className="flex h-15 items-center bg-[linear-gradient(90deg,#3b2b20,#33241b_50%,#1d1c1e_74%,#1d1c1e_79%,#38261b_88%)] font-['Noto_Sans',sans-serif] text-white">
      <button type="button" aria-label="Start" className="flex w-[73px] justify-center">
        <svg viewBox="0 0 24 24" className="size-6"><path d="M0 3.500l10-1.500v9.500H0zM11 2l13-2v11.500H11zM0 12.500h10V22L0 20.500zM11 12.500h13V24l-13-2z" fill="#fff" /></svg>
      </button>
      <label className="flex h-15 w-[431px] items-center overflow-hidden border-y-2 border-l border-[#b9b9b9] bg-[#f2f2f2]">
        <svg viewBox="0 0 26 26" className="mr-4 ml-4 size-[26px] shrink-0" fill="none" stroke="#222" strokeWidth="1.600"><circle cx="16" cy="9.500" r="8" /><path d="M10.500 15.500L1 25" /></svg>
        <input aria-label="Search" placeholder="Type here to search" className="min-w-0 flex-1 bg-transparent text-[21px] text-black outline-none placeholder:text-[#2b2b2b] placeholder:opacity-100" />
        <AcropolisArt />
      </label>
      <button type="button" aria-label="Task View" className="flex w-[75px] justify-center">
        <svg viewBox="0 0 26 26" className="size-[26px]" fill="none" stroke="#fff" strokeWidth="1.500"><path d="M1 1v4h16V1M1 9h16v9H1zM1 25v-3h16v3M23 1v4M23 12v13" /><path d="M23 7v4" strokeWidth="3" /></svg>
      </button>
      <nav className="flex h-full items-stretch">
        {apps.map(app => (
          <button
            key={app.name}
            type="button"
            aria-label={app.name}
            className={clsx('flex w-[75px] flex-col items-center', app.active && 'bg-[#5c524b]')}
          >
            <span className="flex flex-1 items-center">{app.icon}</span>
            <span className={clsx('h-[3px]', app.active ? 'w-full' : 'w-[61px]', app.open && 'bg-[#6fb3ea]')} />
          </button>
        ))}
      </nav>
      <div className="ml-auto flex items-center">
        <svg viewBox="0 0 36 34" className="h-[34px] w-9"><circle cx="15" cy="14" r="13" fill="#f5a623" /><path d="M10 33a7 7 0 0 1 1-13 9 9 0 0 1 17 1 6 6 0 0 1 1 12z" fill="#d9e4f5" /></svg>
        <span className="ml-2.5 text-[20px] whitespace-pre">40°F  Partly sunny</span>
        <svg viewBox="0 0 20 12" className="ml-9 h-3 w-5" fill="none" stroke="#fff" strokeWidth="1.600"><path d="M1 10.500l9-9 9 9" /></svg>
        <svg viewBox="0 0 18 22" className="ml-[18px] h-[22px] w-[18px]" fill="none" stroke="#fff" strokeWidth="1.500"><rect x="1" y="5" width="11" height="12" rx="1" /><path d="M12 10l4-3v8l-4-3M3 2q5-2 10 0M3 20q5 2 10 0" /></svg>
        <svg viewBox="0 0 25 18" className="ml-3.5 h-[18px] w-[25px]" fill="none" stroke="#fff" strokeWidth="1.400"><path d="M10 4h12v11H6v-3" /><path d="M10 6h10v7H8v-3h2z" fill="#fff" stroke="none" /><path d="M23.500 7v5M2 1v3M6 1v3M1 4h6v2q-3 4-6 0zM4 8v4" /></svg>
        <svg viewBox="0 0 20 20" className="ml-4 size-5" fill="none" stroke="#fff" strokeWidth="1.400"><path d="M1 19Q2 3 19 1M6 19Q7 8 19 6M11 19q1-7 8-8" /><circle cx="17" cy="17" r="2" fill="#fff" stroke="none" /></svg>
        <svg viewBox="0 0 24 20" className="ml-3.5 h-5 w-6" fill="none" stroke="#fff" strokeWidth="1.400"><path d="M1 7h4l5-5v16l-5-5H1zM13 7q2 3 0 6M16 5q4 5 0 10M19 2q6 8 0 16" /></svg>
        <div className="ml-3.5 w-[34px] text-center text-[16px] leading-7">ENG<br />US</div>
        <div className="ml-3.5 w-[90px] text-center text-[16px] leading-7 whitespace-nowrap">7:43 AM<br />4/30/2023</div>
        <svg viewBox="0 0 25 25" className="ml-[26px] size-[25px]" fill="none"><path d="M0 0h25v18H14l-5 6v-6H0z" fill="#fff" /><path d="M4 5h17M4 9h17M4 13h10" stroke="#33241b" strokeWidth="1.400" /><path d="M18 13q3 6-4 8 4 4 8 0t-4-8z" fill="#33241b" stroke="#fff" /></svg>
        <span className="mr-1.5 ml-[31px] h-15 w-px bg-[#8b8079]" />
      </div>
    </footer>
  );
}

export default function App() {
  return (
    <div className="flex min-h-screen flex-col bg-[#646c7b] font-['Liberation_Sans',Arial,sans-serif]">
      <svg className="absolute size-0" aria-hidden="true">
        <defs>
          <linearGradient id="caption"><stop stopColor="#1b31b0" /><stop offset="1" stopColor="#86b4f4" /></linearGradient>
          <linearGradient id="levels"><stop stopColor="#20d030" /><stop offset=".5" stopColor="#f0e020" /><stop offset=".8" stopColor="#e03010" /><stop offset="1" stopColor="#300" /></linearGradient>
          <linearGradient id="edge"><stop stopColor="#2fb4ea" /><stop offset="1" stopColor="#62d858" /></linearGradient>
        </defs>
      </svg>
      <header>
        <TitleBar />
        <nav className="flex h-7 items-center gap-[21px] bg-white pl-[11px] font-['Noto_Sans',sans-serif] text-[17px] text-[#1a1a1a]">
          {menus.map(menu => <button key={menu} type="button">{menu}</button>)}
        </nav>
        <div role="toolbar" className="flex h-[52px] border-t-2 border-b-2 border-t-[#8a8a8a] border-b-[#9aa2b0] bg-[#4f5561] pt-px pl-[3px]">
          <ToolGroup tools={modeTools} className="w-[121px]" />
          <ToolGroup tools={fileTools} className="w-[190px]" />
          <ToolGroup tools={editTools} className="w-[570px]" />
          <ToolGroup tools={envelopeTools} className="w-[294px]" />
          <ToolGroup tools={cursorTools} className="w-[122px]" />
          <ToolGroup tools={windowTools} className="w-[467px]" />
          <ToolGroup tools={helpTools} className="w-[121px]" />
        </div>
      </header>
      <main className="flex flex-1 flex-col border-r-2 border-l-2 border-r-[#c8ccd2] border-l-[#a9adb4]">
        <div className="flex flex-1">
          <Organizer />
          <div className="w-2 shrink-0 border-r-2 border-l-2 border-r-[#353a43] border-l-[#9aa2b0]" />
          <Multitrack />
        </div>
        <Sash />
        <TransportRow />
        <Sash />
        <LevelsRow />
      </main>
      <Taskbar />
    </div>
  );
}
